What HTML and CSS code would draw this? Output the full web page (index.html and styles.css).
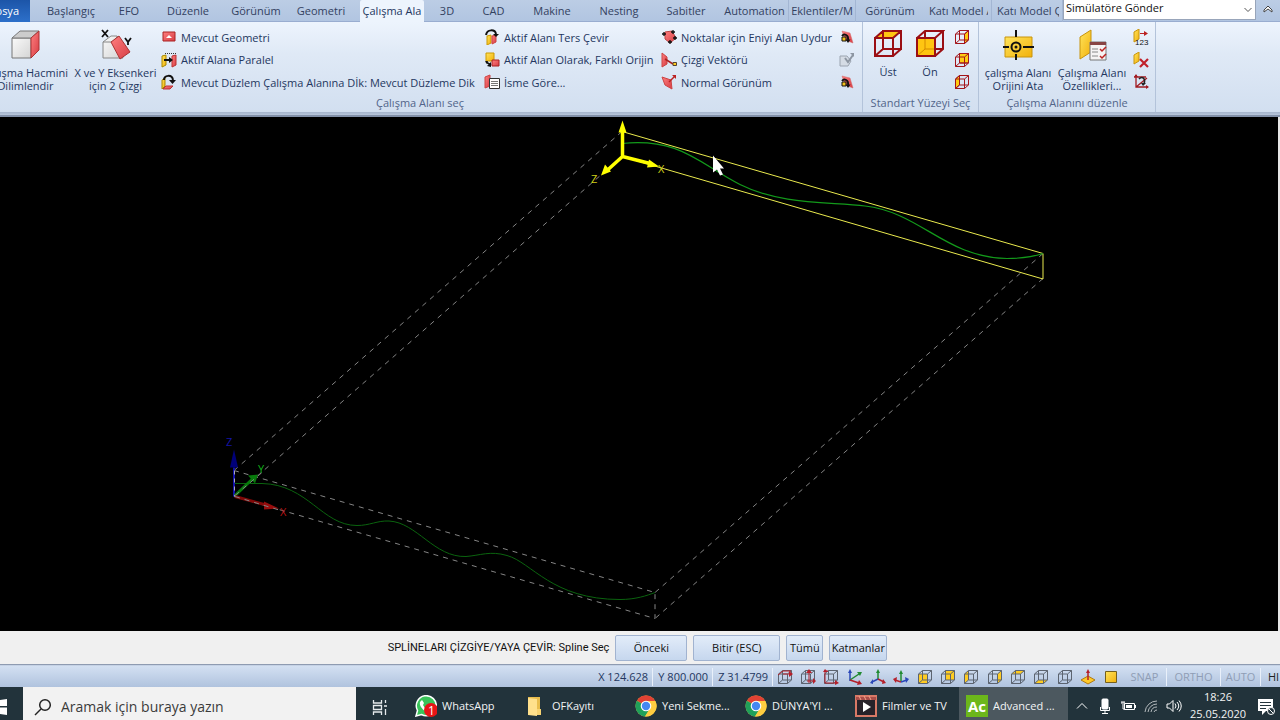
FILE: index.html
```html
<!DOCTYPE html>
<html lang="tr">
<head>
<meta charset="utf-8">
<title>Çalışma Alanı</title>
<link rel="stylesheet" href="styles.css">
</head>
<body>
<svg class="defs" aria-hidden="true">
  <defs>
    <linearGradient id="red" x1="0" y1="0" x2="1" y2="1"><stop offset="0" stop-color="#ff8080"/><stop offset="1" stop-color="#d63c44"/></linearGradient>
    <linearGradient id="gold" x1="0" y1="0" x2="1" y2="1"><stop offset="0" stop-color="#ffe45c"/><stop offset="1" stop-color="#f2b10c"/></linearGradient>
    <linearGradient id="grey" x1="0" y1="0" x2="1" y2="1"><stop offset="0" stop-color="#fafafa"/><stop offset="1" stop-color="#d4d4d4"/></linearGradient>
    <symbol id="wire" viewBox="0 0 16 16"><path d="M1.500 5h9v9.500h-9zM5.500 1.500h9v9.500h-9zM1.500 5l4-3.500M10.500 5l4-3.500M10.500 14.500l4-3.500M1.500 14.500l4-3.500"/></symbol>
    <symbol id="plane-turn" viewBox="0 0 16 16"><path d="M3 2l8 2 3 10-8-3z" fill="url(#red)" stroke="#d06a6a" stroke-width=".5"/><path d="M3 8h4v4H3z" fill="#f5c21c" stroke="#111"/><path d="M3 7c2-3 7-1 6 4" fill="none" stroke="#111" stroke-width="1.800"/><path d="M6.500 10.500h5L9 14z" fill="#111"/></symbol>
    <symbol id="chrome" viewBox="0 0 22 22"><circle cx="11" cy="11" r="10.500" fill="#ffcd40"/><path d="M11 11L1.900 5.700A10.500 10.500 0 0 1 20.100 5.700z" fill="#e24234"/><path d="M1.900 5.700A10.500 10.500 0 0 0 10 21.500L15 13.500 11 11z" fill="#1fa05a"/><path d="M11 6h9.300A10.500 10.500 0 0 1 10 21.500L15.400 13z" fill="#ffcd40"/><circle cx="11" cy="11" r="5.300" fill="#fff"/><circle cx="11" cy="11" r="4.200" fill="#4688f1"/></symbol>
  </defs>
</svg>

<nav class="tabs" aria-label="Şerit">
  <button class="tab tab-file">Dosya</button>
  <button class="tab">Başlangıç</button>
  <button class="tab">EFO</button>
  <button class="tab">Düzenle</button>
  <button class="tab">Görünüm</button>
  <button class="tab">Geometri</button>
  <button class="tab tab-active">Çalışma Ala</button>
  <button class="tab">3D</button>
  <button class="tab">CAD</button>
  <button class="tab">Makine</button>
  <button class="tab">Nesting</button>
  <button class="tab">Sabitler</button>
  <button class="tab">Automation</button>
  <button class="tab tab-ruled">Eklentiler/M</button>
  <button class="tab">Görünüm</button>
  <button class="tab tab-cut"><span>Katı Model A</span></button>
  <button class="tab tab-cut"><span>Katı Model Ç</span></button>
  <div class="combo">
    <select aria-label="Simülatör"><option>Simülatöre Gönder</option></select>
    <svg viewBox="0 0 8 6" width="8" height="6"><path d="M.5 1L4 4.500 7.500 1" fill="none" stroke="#555"/></svg>
  </div>
  <button class="tab collapse" aria-label="Şeridi daralt"><svg viewBox="0 0 10 8" width="10" height="8"><path d="M1 5L5 1l4 4v2L5 4 1 7z" fill="#fff" stroke="#444"/></svg></button>
</nav>

<header class="ribbon">
  <section class="group group-select">
    <div class="group-body">
      <button class="big big-cut">
        <svg viewBox="0 0 32 32"><path d="M2 9h19v20H2z" fill="url(#grey)" stroke="#777"/><path d="M2 9l8-7h19l-8 7z" fill="#ccc" stroke="#777"/><path d="M21 9l8-7v19l-8 8z" fill="url(#red)" stroke="#a33"/></svg>
        <span>Çalışma Hacmini<br>Dilimlendir</span>
      </button>
      <button class="big big-axes">
        <svg viewBox="0 0 32 32"><path d="M3 13l8-6h6l6 22H3z" fill="url(#grey)" stroke="#888"/><path d="M3 13h9l6-6" fill="none" stroke="#888"/><path d="M11 13l8-6 11 16-10 7z" fill="url(#red)" stroke="#a33"/><path d="M2 1l6 7M8 1L2 8M25 9l3 4 3-4M28 13v3" fill="none" stroke="#111" stroke-width="1.800"/></svg>
        <span>X ve Y Eksenkeri<br>için 2 Çizgi</span>
      </button>
      <div class="list list-planes">
        <button class="item"><svg viewBox="0 0 16 16"><path d="M2 3h12v9H2z" fill="url(#red)" stroke="#a22"/><path d="M5 9l3-3 3 3z" fill="#fff"/></svg>Mevcut Geometri</button>
        <button class="item"><svg viewBox="0 0 16 16"><path d="M1 4l4-1v10l-4 2z" fill="url(#gold)" stroke="#a80"/><path d="M11 4l4-1v10l-4 2z" fill="url(#red)" stroke="#b33"/><path d="M4 1.500h11" stroke="#333" stroke-dasharray="1 1"/><path d="M3 8h6" stroke="#111" stroke-width="2"/><path d="M8 5l4 3-4 3z" fill="#111"/></svg>Aktif Alana Paralel</button>
        <button class="item"><svg viewBox="0 0 16 16"><path d="M1 6l3-2v8l-3 3z" fill="url(#gold)" stroke="#a80"/><path d="M2 15l3-3h7l-3 3z" fill="url(#red)" stroke="#b33"/><path d="M3 6C3 1 11 0 12 6" fill="none" stroke="#111" stroke-width="2"/><path d="M8 6h7l-3.500 4z" fill="#111"/></svg>Mevcut Düzlem Çalışma Alanına Dİk: Mevcut Düzleme Dik</button>
      </div>
      <div class="list list-active">
        <button class="item"><svg viewBox="0 0 16 16"><path d="M3 7l4-1v8l-4 2z" fill="url(#gold)" stroke="#c90"/><path d="M8 7l4-1v7l-4 2z" fill="url(#red)" stroke="#c44"/><path d="M2 6C3 0 11 0 12 5" fill="none" stroke="#111" stroke-width="2"/><path d="M9 5h6l-3 3z" fill="#111"/></svg>Aktif Alanı Ters Çevir</button>
        <button class="item"><svg viewBox="0 0 16 16"><path d="M2 1h8v8H2z" fill="url(#gold)" stroke="#c90"/><path d="M8 8h7v6H8z" fill="url(#red)" stroke="#a22"/><path d="M2 10l5 3" stroke="#111" stroke-width="1.500"/><path d="M1 9h3l-1 3zM7 10v5l-4-1z" fill="#111"/></svg>Aktif Alan Olarak, Farklı Orijin</button>
        <button class="item"><svg viewBox="0 0 16 16"><path d="M1 3l5-2v11l-5 2z" fill="url(#red)" stroke="#c44"/><path d="M5.500 4.500h10v10h-10z" fill="#fff" stroke="#333"/><path d="M7 7.500h7M7 9.500h7M7 11.500h7" stroke="#777"/></svg>İsme Göre...</button>
      </div>
      <div class="list list-fit">
        <button class="item"><svg viewBox="0 0 16 16"><path d="M4 3l7-1 4 7-6 5-5-4z" fill="url(#red)" stroke="#b44"/><path d="M1 5h4M3 3v4M10 3h4M12 1v4M12 9h4M14 7v4M7 13h4M9 11v4" stroke="#111" stroke-width="1.300"/></svg>Noktalar için Eniyi Alan Uydur</button>
        <button class="item"><svg viewBox="0 0 16 16"><path d="M1 1l5 4v7l-5 3z" fill="url(#red)" stroke="#c44"/><path d="M4 7l8 5" stroke="#a22" stroke-width="1.500"/><path d="M12 10.500h3.500v3H12z" fill="#fc2" stroke="#543"/></svg>Çizgi Vektörü</button>
        <button class="item"><svg viewBox="0 0 16 16"><path d="M1 3l9 3 1 9-7-4z" fill="url(#red)" stroke="#c44"/><path d="M8 8l6-6" stroke="#b22" stroke-width="1.500"/><path d="M11 1h4v4z" fill="#b22"/></svg>Normal Görünüm</button>
      </div>
      <div class="list list-icons">
        <button class="item" aria-label="Düzlemi döndür"><svg><use href="#plane-turn"/></svg></button>
        <button class="item" aria-label="Yüzey vektörü"><svg viewBox="0 0 16 16"><path d="M1 4h7l4 5-3 5H1z" fill="#d5dce5" stroke="#9ba4b0"/><path d="M6 6l3 4 5-7" fill="none" stroke="#8d96a2" stroke-width="2"/><path d="M11 1h4v4z" fill="#8d96a2"/></svg></button>
        <button class="item" aria-label="Düzlemi çevir"><svg><use href="#plane-turn"/></svg></button>
      </div>
    </div>
    <h2>Çalışma Alanı seç</h2>
  </section>
  <section class="group group-face">
    <div class="group-body">
      <button class="big face"><svg viewBox="0 0 30 30"><path d="M2 9l8-7h18l-8 7z" fill="#ffc511"/><path d="M2 9h18v18H2zM10 2h18v18H10zM2 9l8-7M20 9l8-7M20 27l8-7M2 27l8-7" fill="none" stroke="#9b0f14" stroke-width="2"/></svg><span>Üst</span></button>
      <button class="big face"><svg viewBox="0 0 30 30"><path d="M2 9h18v18H2z" fill="#ffc511"/><path d="M10 9v11h10M10 20l-8 7" fill="none" stroke="#d58a00"/><path d="M2 9h18v18H2zM2 9l8-7h18l-8 7M10 2v7M28 2v18l-8 7M20 20h8" fill="none" stroke="#9b0f14" stroke-width="2"/></svg><span>Ön</span></button>
      <div class="list list-views">
        <button class="item" aria-label="Sağ"><svg class="red-wire" viewBox="0 0 16 16"><path d="M10.500 5l4-3.500V11l-4 3.500z" fill="#fc1"/><use href="#wire"/></svg></button>
        <button class="item" aria-label="Arka"><svg class="red-wire" viewBox="0 0 16 16"><path d="M5.500 1.500h9V11h-9z" fill="#fc1"/><use href="#wire"/></svg></button>
        <button class="item" aria-label="Sol"><svg class="red-wire" viewBox="0 0 16 16"><path d="M1.500 5l4-3.500V11l-4 3.500z" fill="#fc1"/><use href="#wire"/></svg></button>
      </div>
    </div>
    <h2>Standart Yüzeyi Seç</h2>
  </section>
  <section class="group group-edit">
    <div class="group-body">
      <button class="big edit"><svg viewBox="0 0 32 32"><path d="M3 8h27v20H3z" fill="url(#gold)" stroke="#c8940c"/><path d="M14 1v7M14 25v6M1 18h6M21 18h11" stroke="#111" stroke-width="2"/><circle cx="14" cy="18" r="4.500" fill="none" stroke="#111" stroke-width="2"/><circle cx="14" cy="18" r="1.500" fill="#111"/></svg><span>çalışma Alanı<br>Orijini Ata</span></button>
      <button class="big edit"><svg viewBox="0 0 32 32"><path d="M4 8l11-7v22L4 30z" fill="url(#gold)" stroke="#c8940c"/><path d="M14 13h16v18H14z" fill="#f6f3f3" stroke="#777"/><path d="M14 13h16v3H14z" fill="#844"/><path d="M16 20h6M16 23h6M16 27h6" stroke="#888"/><path d="M24 20l2 2 4-4M24 27l2 2 4-4" fill="none" stroke="#b22" stroke-width="1.500"/></svg><span>Çalışma Alanı<br>Özellikleri...</span></button>
      <div class="list list-tools">
        <button class="item" aria-label="Numaralandır"><svg viewBox="0 0 16 16"><path d="M1 3l5-3v10l-5 3z" fill="url(#gold)" stroke="#c8940c"/><path d="M7 4.500h5" stroke="#b22"/><path d="M11 2l4 2.500L11 7z" fill="#b22"/><text x="2" y="16" class="num">123</text></svg></button>
        <button class="item" aria-label="Sil"><svg viewBox="0 0 16 16"><path d="M1 3l5-3v9l-5 3z" fill="url(#gold)" stroke="#c8940c"/><path d="M7 7l8 8M15 7l-8 8" stroke="#c0202a" stroke-width="2.200"/></svg></button>
        <button class="item" aria-label="Eksenleri döndür"><svg viewBox="0 0 16 16"><path d="M3 1v12h12M3 13L14 4M1 3h12" fill="none" stroke="#a11a20" stroke-width="1.300"/><path d="M3 0l2 3H1zM16 13l-3 2v-4z" fill="#a11a20"/><path d="M6 5c3-3 7-1 5 5" fill="none" stroke="#222" stroke-width="1.600"/><path d="M8 9h5l-3 3z" fill="#222"/></svg></button>
      </div>
    </div>
    <h2>Çalışma Alanını düzenle</h2>
  </section>
</header>

<main class="view">
  <svg class="scene" viewBox="0 118 1278 513" role="img" aria-label="Çizim alanı">
    <g class="hidden-edge">
      <path d="M622 132L234 471"/><path d="M622 157L234 497"/>
      <path d="M1043 254L655 593"/><path d="M1043 279L655 619"/>
      <path d="M234 471L655 593V619L234 497"/>
    </g>
    <path class="spline-low" d="M234 484H262C308 485 322 526 357 526C370 526 377 521 389 521.500C417 523 434 558 466 557C480 556 490 551 507 556C532 563 552 600 620 600C636 600 647 596 655 593"/>
    <path d="M234 497V468" stroke="#1111a8" stroke-width="2"/><path d="M234 450l4 18h-8z" fill="#000079"/>
    <path d="M234.500 471V497" stroke="#aab" stroke-dasharray="4 4"/>
    <path d="M235 496L253 479" stroke="#087a0c" stroke-width="3"/><path d="M258 475l-3 9-7-8z" fill="#087a0c"/>
    <path d="M235 497L268 506" stroke="#810808" stroke-width="3"/><path d="M264 502l15 7-15 1z" fill="#980d0d"/>
    <path class="hidden-edge" d="M235 496L262 473M235 497L284 512"/>
    <text x="226" y="446" fill="#1414a8">Z</text><text x="258" y="473" fill="#11b51a">Y</text><text x="280" y="516" fill="#b51212">X</text>
    <path class="active-edge" d="M622 132L1043 254V279.500L622 157"/>
    <path class="spline" d="M622 144C681 138 700 165 740 185C782 206 831 202 865 206.500C921 213 945 258 1007 259C1022 259 1034 257 1043 254"/>
    <path d="M622.500 157V130M622.500 157L650 164M622.500 157L607 171" fill="none" stroke="#ff0" stroke-width="3.500"/>
    <path d="M622.500 121l4 12h-8zM659 167l-12 1 2-8zM601 176l4-11 6 7z" fill="#ff0"/>
    <text x="591" y="183" fill="#cfcf18">Z</text><text x="658" y="173" fill="#cfcf18">X</text>
    <path d="M713 156v17l4-3 3 6 3-1-3-6h4z" fill="#fff"/>
  </svg>
</main>

<section class="prompt">
  <span class="prompt-text">SPLİNELARI ÇİZGİYE/YAYA ÇEVİR: Spline Seç</span>
  <button class="key key-prev">Önceki</button>
  <button class="key key-end">Bitir (ESC)</button>
  <button class="key key-all">Tümü</button>
  <button class="key key-layers">Katmanlar</button>
</section>

<section class="status">
  <span class="coord">X 124.628</span>
  <span class="coord">Y 800.000</span>
  <span class="coord">Z 31.4799</span>
  <div class="status-icons">
    <svg viewBox="0 0 16 16"><use class="wire" href="#wire"/><path d="M1 6l5-4h8M6 5h9" fill="none" stroke="#b5202a"/><path d="M12 2l4 3-4 3z" fill="#b5202a"/></svg>
    <svg viewBox="0 0 16 16"><use class="wire" href="#wire"/><path d="M9 14V2M7 12h8" fill="none" stroke="#b5202a"/><path d="M9 0l3 4H6zM13 9l3 3-3 3z" fill="#b5202a"/></svg>
    <svg viewBox="0 0 16 16"><use class="wire" href="#wire"/><path d="M2 1v13h12M2 2h3" fill="none" stroke="#b5202a"/><path d="M2 0l3 3H0zM12 11l4 3-4 2z" fill="#b5202a"/></svg>
    <svg viewBox="0 0 16 16"><path d="M3 12V2" stroke="#2946b8" stroke-width="1.500"/><path d="M3 0l2 4H1z" fill="#2946b8"/><path d="M3 11l9-6" stroke="#218a32" stroke-width="1.500"/><path d="M10 3l5 0-2 4z" fill="#218a32"/><path d="M3 11l9 3" stroke="#b5202a" stroke-width="1.500"/><path d="M12 11l3 4-5 1z" fill="#b5202a"/></svg>
    <svg viewBox="0 0 16 16"><path d="M8 10V2" stroke="#218a32" stroke-width="1.500"/><path d="M8 0l2 4H6z" fill="#218a32"/><path d="M8 10l-6 3" stroke="#2946b8" stroke-width="1.500"/><path d="M3 10v5l-3-1z" fill="#2946b8"/><path d="M8 10l6 3" stroke="#b5202a" stroke-width="1.500"/><path d="M13 10l3 4-4 1z" fill="#b5202a"/></svg>
    <svg viewBox="0 0 16 16"><path d="M8 12V3" stroke="#218a32" stroke-width="1.500"/><path d="M8 1l2 4H6z" fill="#218a32"/><path d="M8 13l-6-2" stroke="#b5202a" stroke-width="1.500"/><path d="M4 8l-4 2 3 4z" fill="#b5202a"/><path d="M8 13l6-2" stroke="#2946b8" stroke-width="1.500"/><path d="M12 8l4 2-3 4z" fill="#2946b8"/></svg>
    <svg viewBox="0 0 16 16"><path d="M1.500 5h9v9.500h-9z" fill="#fc2"/><use class="wire" href="#wire"/></svg>
    <svg viewBox="0 0 16 16"><path d="M5.500 1.500h9V11h-9z" fill="#fc2"/><use class="wire" href="#wire"/></svg>
    <svg viewBox="0 0 16 16"><path d="M1.500 5l4-3.500V11l-4 3.500z" fill="#fc2"/><use class="wire" href="#wire"/></svg>
    <svg viewBox="0 0 16 16"><path d="M10.500 5l4-3.500V11l-4 3.500z" fill="#fc2"/><use class="wire" href="#wire"/></svg>
    <svg viewBox="0 0 16 16"><path d="M1.500 5l4-3.500h9L10.500 5z" fill="#fc2"/><use class="wire" href="#wire"/></svg>
    <svg viewBox="0 0 16 16"><path d="M1.500 14.500l4-3.500h9l-4 3.500z" fill="#fc2"/><use class="wire" href="#wire"/></svg>
    <svg viewBox="0 0 16 16"><use class="wire" href="#wire"/></svg>
    <svg viewBox="0 0 16 16"><path d="M1 11l7-4 7 4-7 4z" fill="#ffc928" stroke="#b07a10"/><path d="M8 11V2" stroke="#b5202a" stroke-width="1.500"/><path d="M8 0l2 4H6z" fill="#b5202a"/></svg>
    <svg viewBox="0 0 16 16"><path d="M2.500 2.500h11v11h-11z" fill="url(#gold)" stroke="#75601c"/></svg>
  </div>
  <button class="mode">SNAP</button>
  <button class="mode mode-wide">ORTHO</button>
  <button class="mode mode-auto">AUTO</button>
  <button class="mode mode-on">HI</button>
</section>

<footer class="taskbar">
  <button class="start" aria-label="Başlat"><svg viewBox="0 0 8 18" width="8" height="18"><path d="M0 2l7-1v7H0zM0 9.500h7V17l-7-1z" fill="#fff"/></svg></button>
  <label class="search">
    <svg viewBox="0 0 18 18" width="18" height="18"><circle cx="11" cy="7" r="5.300"/><path d="M7 11l-6 6"/></svg>
    <input type="text" placeholder="Aramak için buraya yazın" aria-label="Arama">
  </label>
  <button class="task-view" aria-label="Görev görünümü"><svg viewBox="0 0 16 16" width="16" height="16"><path d="M1.500 1v3h8V1M1.500 6.500h8v4h-8zM1.500 16v-3h8v3M13.500 1v3M13.500 10v6M12 7h3" fill="none" stroke="#e6eaec" stroke-width="1.300"/></svg></button>
  <button class="task"><svg viewBox="0 0 22 22"><path d="M1 21l1.500-5.500A10 10 0 1 1 6.500 19.500z" fill="#3ac45a" stroke="#fff" stroke-width="1.500"/><path d="M7 5l2 3-1 2c1 2 2 3 4 4l2-1 3 2c-1 3-4 3-7 1s-6-6-5-9z" fill="#fff"/><circle cx="16" cy="15" r="7" fill="#e81417"/><text x="13" y="20" class="badge">1</text></svg>WhatsApp</button>
  <button class="task"><svg viewBox="0 0 22 22"><path d="M3 2h12v18H3z" fill="#e9bd4d"/><path d="M3 3l9 1v17l-9-1z" fill="#ffe08c"/><path d="M12 14h4v6h-4z" fill="#f8d371"/></svg>OFKayıtı</button>
  <button class="task"><svg><use href="#chrome"/></svg>Yeni Sekme...</button>
  <button class="task"><svg><use href="#chrome"/></svg>DÜNYA'YI ...</button>
  <button class="task"><svg viewBox="0 0 22 22"><path d="M1 1h20v20H1z" fill="#272229" stroke="#d87966" stroke-width="2"/><path d="M1 2h20v3H1z" fill="#a94d49"/><path d="M4 1l2 4M9 1l2 4M14 1l2 4" stroke="#f4a48a"/><path d="M8 7v10l8-5z" fill="#fff"/></svg>Filmler ve TV</button>
  <button class="task task-active"><svg viewBox="0 0 22 22"><path d="M0 0h22v22H0z" fill="#6cb71b"/><text x="2" y="17" class="logo">Ac</text></svg>Advanced ...</button>
  <div class="tray">
    <svg viewBox="0 0 16 16"><path d="M3 10.500l5-5 5 5"/></svg>
    <svg viewBox="0 0 16 16"><rect x="5" y="1" width="6" height="10" rx="1" fill="#fff"/><path d="M3.500 9v3.500h9V9M8 13v2.500M5 15.500h6"/></svg>
    <svg viewBox="0 0 16 16"><path d="M4.500 5.500h10v6h-10z"/><path d="M6 7h6v3H6zM14 7h2v3h-2z" fill="#fff" stroke="none"/><path d="M1 5h4M2 3v2M4 3v2M3 6v5h2"/></svg>
    <svg viewBox="0 0 16 16"><path d="M2 14A12 12 0 0 1 14 3M5 14a9 9 0 0 1 9-8M8 14a6 6 0 0 1 6-5M11 14a3 3 0 0 1 3-2" stroke="#b4babd"/></svg>
    <svg viewBox="0 0 16 16"><path d="M1 6h2.500L7 2.500v11L3.500 10H1zM9 5.500q2 2.500 0 5M11 4q3.500 4 0 8M13 2.500q4.500 5.500 0 11"/></svg>
  </div>
  <time class="clock">18:26<br>25.05.2020</time>
  <button class="notice" aria-label="Bildirimler"><svg viewBox="0 0 18 18" width="18" height="18"><path d="M1 1h15v12H9l-4 4v-4H1z" fill="#fff"/><path d="M3 4.500h11M3 7.500h11M3 10.500h6" stroke="#24343c"/><circle cx="14" cy="13" r="3.500" fill="#24343c" stroke="#fff"/><path d="M12 11l4 4" stroke="#fff"/></svg></button>
</footer>
</body>
</html>
```

FILE: styles.css
```css
* { box-sizing: border-box; }
body {
  margin: 0;
  height: 100vh;
  display: flex;
  flex-direction: column;
  overflow: hidden;
  background: #000;
  color: #24375f;
  font: 11px/13px "Open Sans", "Noto Sans", sans-serif;
}
button, select, input { margin: 0; padding: 0; border: 0; background: none; color: inherit; font: inherit; }
svg { display: block; flex: none; }
.defs { position: absolute; width: 0; height: 0; }

.tabs {
  flex: none;
  height: 22px;
  display: grid;
  grid-template-columns: 30px 82px 34px 84px 52px 78px 64px 46px 47px 70px 64px 70px 67px 68px 68px 68px 71px 1fr 24px;
  background: linear-gradient(#bccde5, #b1c5e1);
  border-bottom: 1px solid #99add0;
}
.tab { white-space: nowrap; overflow: hidden; display: flex; align-items: center; justify-content: center; padding-bottom: 2px; color: #33415f; }
.tab-file { justify-content: flex-end; padding-right: 11px; background: linear-gradient(#1c55a8, #2d70ca); color: #fff; }
.tab-active { height: 22px; background: #edf4fd; border-radius: 2px 2px 0 0; color: #24375f; }
.tab-ruled { border-left: 1px solid #a3b6d3; border-right: 1px solid #a3b6d3; }
.tab-cut { justify-content: flex-start; padding: 0 3px 2px 5px; border-right: 1px solid #a3b6d3; }
.tab-cut span { overflow: hidden; }
.combo { display: flex; align-items: center; height: 20px; padding-right: 3px; background: #fff; border: 1px solid #98a5ba; border-top: 0; }
.combo select { flex: 1; height: 16px; padding-left: 2px; margin-bottom: 5px; appearance: none; outline: 0; color: #111; }
.collapse { padding-bottom: 4px; }

.ribbon {
  flex: none;
  display: flex;
  height: 95px;
  background: linear-gradient(#edf4fd 0, #dfe9f6 35%, #d2dff0 90px, #a6b5cc 90px, #b9c7dc 93px);
  border-bottom: 2px solid #8391a9;
}
.group { padding-top: 4px; margin-bottom: 3px; border-right: 1px solid #b3c3da; overflow: hidden; }
.group-select { width: 863px; }
.group-face { width: 116px; }
.group-edit { width: 177px; }
.group-body { display: flex; height: 69px; }
.group h2 { margin: 0; padding-top: 1px; text-align: center; font: inherit; line-height: 14px; color: #52658a; }
.group-select h2 { padding-right: 22px; }
.big { flex: none; display: flex; flex-direction: column; align-items: center; gap: 5px; padding-top: 3px; white-space: nowrap; }
.big svg { width: 32px; height: 32px; }
.big-cut { width: 93px; margin-left: -21px; }
.big-axes { width: 87px; }
.big.face { width: 42px; gap: 6px; }
.big.face svg { width: 30px; height: 30px; }
.big.edit { width: 74px; }
.group-face .group-body { padding-left: 4px; }
.group-edit .group-body { padding-left: 2px; }
.list { display: grid; grid-template-rows: 22px 23px 22px; flex: none; }
.list-planes { width: 321px; padding-left: 2px; }
.list-active { width: 177px; padding-left: 4px; }
.list-fit { width: 179px; padding-left: 4px; }
.list-icons { padding-left: 3px; }
.list-views { padding-left: 3px; }
.list-tools { padding-left: 4px; }
.item { display: flex; align-items: center; gap: 4px; white-space: nowrap; }
.item svg { width: 16px; height: 16px; }
.red-wire { fill: none; stroke: #a2151b; stroke-width: 1; }
.num { font: 8px "Liberation Sans", sans-serif; fill: #111; stroke: none; }

.view { flex: 1; min-height: 0; background: #000; border-right: 2px solid #e6e6e6; }
.scene { width: 100%; height: 100%; fill: none; font: 11px "Open Sans", sans-serif; }
.hidden-edge { stroke: #858585; stroke-dasharray: 5 5; }
.active-edge { stroke: #eaea4e; }
.spline { stroke: #139a1b; stroke-width: 1.2; }
.spline-low { stroke: #0b640f; }

.prompt {
  flex: none;
  height: 34px;
  display: flex;
  align-items: center;
  justify-content: center;
  gap: 6px;
  padding-right: 5px;
  background: #f0f0f0;
  color: #111;
  border-bottom: 1px solid #8e9bb1;
}
.prompt-text { font-family: Roboto, sans-serif; }
.key { height: 26px; background: linear-gradient(#e2ecf9, #c6d7ee); border: 1px solid #a1b3d0; border-radius: 2px; }
.key-prev { width: 72px; }
.key-end { width: 87px; }
.key-all { width: 37px; }
.key-layers { width: 58px; }

.status {
  flex: none;
  height: 22px;
  display: flex;
  align-items: center;
  justify-content: flex-end;
  background: linear-gradient(#d3e0f2, #b0c3de);
  border-top: 1px solid #c5d2e5;
}
.coord { width: 60px; padding-right: 4px; text-align: right; border-right: 1px solid #e9f0fa; line-height: 18px; white-space: nowrap; }
.status-icons { width: 350px; display: grid; grid-template-columns: repeat(15, 1fr); justify-items: center; }
.status-icons svg { width: 16px; height: 16px; }
.wire { fill: none; stroke: #5c6470; }
.mode { width: 44px; line-height: 18px; color: #8f9db5; border-right: 1px solid #e9f0fa; text-align: center; }
.mode-wide { width: 54px; }
.mode-auto { width: 40px; }
.mode-on { width: 19px; padding-left: 7px; text-align: left; color: #222; border: 0; }

.taskbar { flex: none; height: 33px; display: flex; align-items: stretch; background: #22333b; color: #f2f4f5; overflow: hidden; }
.start { width: 23px; display: flex; align-items: center; padding-top: 6px; }
.search { flex: 1; display: flex; align-items: center; gap: 9px; padding: 6px 11px 0; background: #f2f2f2; }
.search svg { fill: none; stroke: #222; stroke-width: 1.5; }
.search input { flex: 1; min-width: 0; font-size: 14px; line-height: 20px; outline: 0; }
.search input::placeholder { color: #3b3b3b; opacity: 1; }
.task-view { width: 53px; display: flex; align-items: center; justify-content: center; padding: 6px 6px 0 0; }
.task { width: 110px; display: flex; align-items: center; gap: 5px; padding: 4px 0 0 6px; white-space: nowrap; }
.task svg { width: 22px; height: 22px; }
.task-active { width: 109px; padding-left: 7px; background: #4c585f; }
.badge { font: 12px "Open Sans", sans-serif; fill: #fff; }
.logo { font: bold 15px "Open Sans", sans-serif; fill: #fff; }
.tray { width: 116px; display: flex; align-items: center; justify-content: space-between; padding: 5px 2px 0 6px; }
.tray svg { width: 16px; height: 16px; fill: none; stroke: #fff; }
.clock { width: 68px; padding-top: 1px; line-height: 17px; text-align: center; }
.notice { width: 28px; display: flex; align-items: center; justify-content: center; padding-top: 6px; }
```
